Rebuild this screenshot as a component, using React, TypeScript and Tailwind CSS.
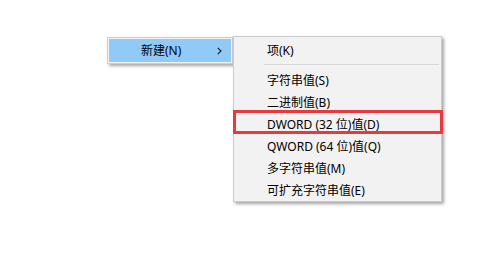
import React from "react";

const items = [
  "字符串值(S)",
  "二进制值(B)",
  "DWORD (32 位)值(D)",
  "QWORD (64 位)值(Q)",
  "多字符串值(M)",
  "可扩充字符串值(E)",
];

export default function App() {
  return (
    <div
      className="relative w-[495px] h-[254px] bg-white text-[12px] text-black"
      style={{ fontFamily: '"Noto Sans", "Noto Sans CJK SC", sans-serif' }}
    >
      {/* Parent menu */}
      <div className="absolute left-[107px] top-[37px] w-[126px] bg-[#f2f2f2] border border-[#cccccc] p-[1px] shadow-[2px_2px_3px_rgba(0,0,0,0.35)]">
        <div className="flex items-center h-[23px] bg-[#91c9f7] pl-[32px] pr-[8px]">
          <span className="flex-1">新建(N)</span>
          <svg width="5" height="8" viewBox="0 0 5 8" className="mr-[1px]">
            <path d="M0.8 0.8 L4 4 L0.8 7.2" fill="none" stroke="#222" strokeWidth="1.2" />
          </svg>
        </div>
      </div>

      {/* Submenu */}
      <div className="absolute left-[233px] top-[36px] w-[209px] bg-[#f2f2f2] border border-[#cccccc] py-[1px] px-[1px] shadow-[2px_2px_3px_rgba(0,0,0,0.35)]">
        <div className="flex items-center h-[22px] pt-[4px] pl-[32px]">项(K)</div>
        <div className="flex items-center h-[8px] pl-[29px] pr-[1px]">
          <div className="h-px w-full bg-[#d7d7d7]" />
        </div>
        {items.map((label) => (
          <div key={label} className="flex items-center h-[22px] pt-[4px] pl-[32px]">
            {label}
          </div>
        ))}
      </div>

      {/* Highlight box */}
      <div className="absolute left-[233px] top-[110px] w-[210px] h-[24px] border-[3px] border-[#e8393f]" />
    </div>
  );
}
